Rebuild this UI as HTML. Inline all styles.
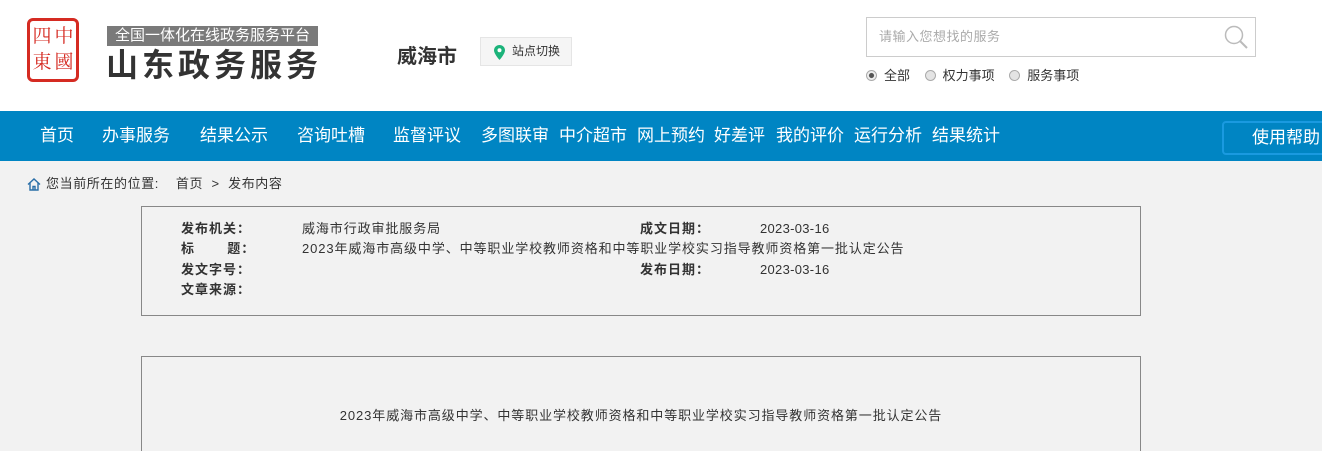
<!DOCTYPE html>
<html style="overflow:hidden"><head><meta charset="utf-8"><style>
*{margin:0;padding:0;box-sizing:border-box}
html,body{width:1322px;height:451px;overflow:hidden}
body{background:#f2f2f2;font-family:"Liberation Sans","Noto Sans CJK SC",sans-serif;position:relative;color:#333}
.hdr{position:absolute;left:0;top:0;width:1322px;height:111px;background:#fff}
.abs{position:absolute;white-space:nowrap}
.nav{position:absolute;left:0;top:111px;width:1322px;height:50px;background:#0085c3;overflow:hidden}
.nav span{position:absolute;top:14px;color:#fff;font-size:17px;line-height:22px}
.box{position:absolute;left:141px;border:1px solid #888;background:#f2f2f2}
.row{position:absolute;font-size:13px;line-height:20px;white-space:nowrap;letter-spacing:0.9px}
.lb{font-weight:bold;color:#333;letter-spacing:1px}
.dt{letter-spacing:0.3px}
</style></head><body>
<div class="hdr">
 <div class="abs" style="left:27px;top:18px;width:52px;height:64px;border:3px solid #d52b22;border-radius:6px;background:#fff"></div>
 <div class="abs" style="left:31px;top:22px;width:44px;height:56px;color:#d52b22;font-size:19px;line-height:26px;font-family:'Noto Serif CJK SC',serif;text-align:center">
  <div style="display:flex"><span style="width:22px">四</span><span style="width:22px">中</span></div><div style="display:flex"><span style="width:22px">東</span><span style="width:22px">國</span></div></div>
 <div class="abs" style="left:107px;top:26px;width:211px;height:20px;background:#7a7a7a;color:#fff;font-size:15px;line-height:20px;text-align:center">全国一体化在线政务服务平台</div>
 <div class="abs" style="left:106px;top:45px;font-size:32px;font-weight:bold;color:#333;letter-spacing:4px;line-height:40px">山东政务服务</div>
 <div class="abs" style="left:397px;top:40px;font-size:20px;font-weight:bold;color:#333">威海市</div>
 <div class="abs" style="left:480px;top:37px;width:92px;height:29px;background:#f5f5f5;border:1px solid #e5e5e5;font-size:12px;line-height:27px;padding-left:31px;color:#333">站点切换</div>
 <svg class="abs" style="left:494px;top:45px" width="11" height="15" viewBox="0 0 11 15"><path d="M5.5 0C2.5 0 0 2.3 0 5.3 0 9 5.5 15 5.5 15S11 9 11 5.3C11 2.3 8.5 0 5.5 0z" fill="#1bb37a"/><circle cx="5.5" cy="5.3" r="2" fill="#fff"/></svg>
 <div class="abs" style="left:866px;top:17px;width:390px;height:40px;border:1px solid #ccc;background:#fff;font-size:13px;line-height:38px;padding-left:12px;color:#aaa;letter-spacing:0.5px">请输入您想找的服务</div>
 <svg class="abs" style="left:1224px;top:25px" width="25" height="24" viewBox="0 0 25 24"><circle cx="10" cy="10" r="8.5" fill="none" stroke="#bbb" stroke-width="1.5"/><line x1="16" y1="16" x2="23" y2="23" stroke="#bbb" stroke-width="2"/></svg>
 <div class="abs" style="left:866px;top:67px;font-size:13px;line-height:18px;color:#333">
  <span style="display:inline-block;width:11px;height:11px;border-radius:50%;border:1px solid #aaa;background:radial-gradient(#555 35%,#eee 45%);vertical-align:-1px;margin-right:7px"></span>全部
  <span style="display:inline-block;width:11px;height:11px;border-radius:50%;border:1px solid #aaa;background:#e4e4e4;vertical-align:-1px;margin:0 7px 0 11px"></span>权力事项
  <span style="display:inline-block;width:11px;height:11px;border-radius:50%;border:1px solid #aaa;background:#e4e4e4;vertical-align:-1px;margin:0 7px 0 11px"></span>服务事项
 </div>
</div>
<div class="nav">
 <span style="left:40px">首页</span><span style="left:102px">办事服务</span><span style="left:200px">结果公示</span><span style="left:297px">咨询吐槽</span><span style="left:393px">监督评议</span><span style="left:481px">多图联审</span><span style="left:559px">中介超市</span><span style="left:637px">网上预约</span><span style="left:714px">好差评</span><span style="left:776px">我的评价</span><span style="left:854px">运行分析</span><span style="left:932px">结果统计</span>
 <div style="position:absolute;left:1222px;top:10px;width:110px;height:34px;border:2px solid #1a9ae0;border-radius:4px"></div>
 <span style="left:1252px;top:16px">使用帮助</span>
</div>
<svg class="abs" style="left:27px;top:178px" width="14" height="13" viewBox="0 0 14 13"><path d="M1 6.5L7 1l6 5.5M3 5v7h8V5M6 12V8.5h2V12" fill="none" stroke="#2a6fa8" stroke-width="1.4"/></svg>
<div class="abs" style="left:46px;top:175px;font-size:13px;line-height:18px;color:#333;letter-spacing:0.6px">您当前所在的位置: &nbsp;&nbsp;&nbsp;首页 &nbsp;&gt;&nbsp; 发布内容</div>
<div class="box" style="top:206px;width:1000px;height:110px"></div>
<div class="row lb" style="left:181px;top:219px">发布机关：</div><div class="row" style="left:302px;top:219px">威海市行政审批服务局</div>
<div class="row lb" style="left:640px;top:219px">成文日期：</div><div class="row dt" style="left:760px;top:219px">2023-03-16</div>
<div class="row lb" style="left:181px;top:239px">标&nbsp;&nbsp;&nbsp;&nbsp;&nbsp;&nbsp;&nbsp;题：</div><div class="row" style="left:302px;top:239px">2023年威海市高级中学、中等职业学校教师资格和中等职业学校实习指导教师资格第一批认定公告</div>
<div class="row lb" style="left:181px;top:260px">发文字号：</div>
<div class="row lb" style="left:640px;top:260px">发布日期：</div><div class="row dt" style="left:760px;top:260px">2023-03-16</div>
<div class="row lb" style="left:181px;top:280px">文章来源：</div>
<div class="box" style="top:356px;width:1000px;height:95px;border-bottom:none"></div>
<div class="row" style="left:141px;width:1000px;text-align:center;top:406px">2023年威海市高级中学、中等职业学校教师资格和中等职业学校实习指导教师资格第一批认定公告</div>
</body></html>
